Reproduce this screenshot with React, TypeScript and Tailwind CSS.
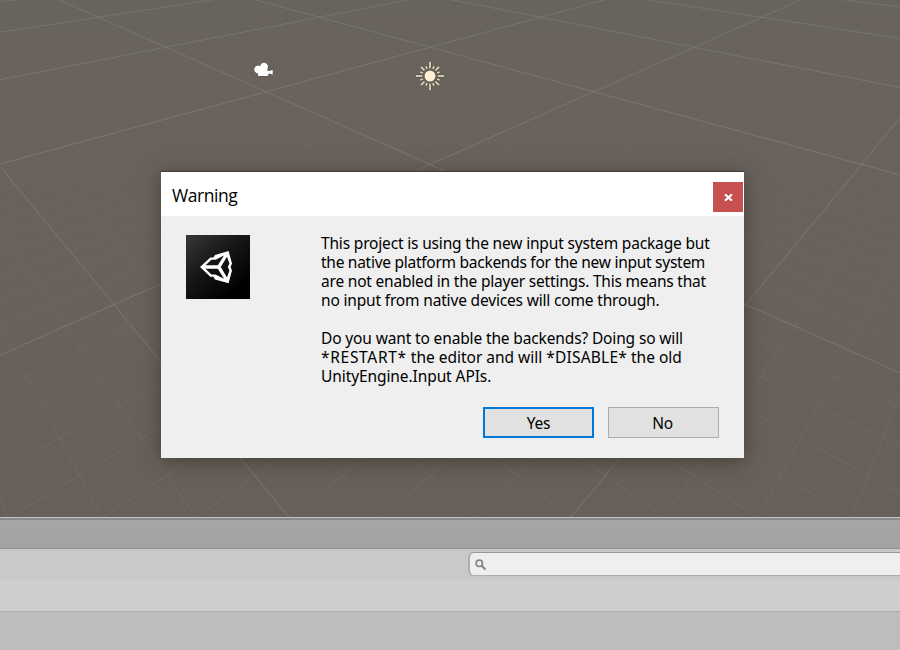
import React from "react";

const CENTER_X = 430;

function project(t: number, w: number): [number, number] {
  const s = 1 / (0.001582 - 0.000735 * t);
  return [CENTER_X + s * w, s / 1.43 - 137.4];
}

function gridPath(offsets: number[]): string {
  const near = 0.74;
  const far = -6;
  return offsets
    .flatMap((c) =>
      [-0.5, 0.5].map((slope) => {
        const a = project(near, c + slope * near);
        const b = project(far, c + slope * far);
        return `M${a[0].toFixed(2)} ${a[1].toFixed(2)}L${b[0].toFixed(2)} ${b[1].toFixed(2)}`;
      }),
    )
    .join("");
}

const MAJOR = gridPath(Array.from({ length: 14 }, (_, i) => i - 6.5));
const MINOR = gridPath(
  Array.from({ length: 101 }, (_, i) => i - 50)
    .filter((i) => Math.abs(i) % 10 !== 5)
    .map((i) => i / 10),
);

function SceneGrid() {
  return (
    <svg className="block h-full w-full" viewBox="0 0 900 517" fill="none">
      <defs>
        <linearGradient id="minorFade" gradientUnits="userSpaceOnUse" x1="0" y1="70" x2="0" y2="480">
          <stop offset="0" stopColor="#74786f" stopOpacity="0" />
          <stop offset="0.4" stopColor="#74786f" stopOpacity="0.17" />
          <stop offset="1" stopColor="#72756c" stopOpacity="0.5" />
        </linearGradient>
        <linearGradient id="majorFade" gradientUnits="userSpaceOnUse" x1="0" y1="0" x2="0" y2="517">
          <stop offset="0" stopColor="#81827e" stopOpacity="0.5" />
          <stop offset="0.3" stopColor="#82827f" stopOpacity="0.65" />
          <stop offset="1" stopColor="#82817e" stopOpacity="0.7" />
        </linearGradient>
      </defs>
      <path d={MINOR} stroke="url(#minorFade)" />
      <path d={MAJOR} stroke="url(#majorFade)" />
      <path
        transform="translate(0.7 0)"
        fill="#fff"
        stroke="#4b4641"
        strokeOpacity="0.5"
        strokeWidth="1.2"
        paintOrder="stroke"
        d="M257.3 76V73.4a3.9 3.9 0 1 1 2.2-7.2a3.9 3.9 0 1 1 7.3 2.3v2.2l2 .2l3.2-1.2v5l-3.2-1.1l-1.2.5v1.2l-1 .7z"
      />
      {["#4b4641", "#ded3b5"].map((color, pass) => (
        <g key={color} stroke={color} strokeWidth={pass ? 1.8 : 3.4} strokeOpacity={pass ? 1 : 0.4}>
          {Array.from({ length: 16 }, (_, i) => {
            const outer = i % 4 === 0 ? 14 : i % 2 === 0 ? 12.8 : 10.4;
            return (
              <line
                key={i}
                x1="0"
                y1={-7.8}
                x2="0"
                y2={-outer}
                transform={`translate(430 76) rotate(${i * 22.5})`}
              />
            );
          })}
          <circle
            cx="430"
            cy="76"
            r={pass ? 5.5 : 6.2}
            fill={pass ? "#fff0d3" : color}
            stroke="none"
            fillOpacity={pass ? 1 : 0.5}
          />
        </g>
      ))}
    </svg>
  );
}

function UnityIcon() {
  return (
    <svg className="size-16 shrink-0" viewBox="0 0 64 64">
      <defs>
        <linearGradient id="tile" x1="0" y1="0" x2="0.75" y2="0.9">
          <stop offset="0" stopColor="#373737" />
          <stop offset="0.5" stopColor="#171717" />
          <stop offset="1" stopColor="#000" />
        </linearGradient>
      </defs>
      <rect width="64" height="64" fill="url(#tile)" />
      <path
        fill="#fff"
        fillRule="evenodd"
        d="M14 32L24.3 22.4H27.4L29 20L42.6 16L46 28.6L44.6 32L46 35.4L42.6 48.3L29 44.5L27.4 41.8H24.3ZM19.5 30.3H31.8L38 20.4L29.5 24.8H25.4ZM19.5 33.7H31.8L38 43.8L29.5 39.4H25.4ZM34.8 32L41 42.4L43.4 35.4L41.8 32L43.4 28.6L41 21.7Z"
      />
    </svg>
  );
}

function Message() {
  return (
    <div className="-mt-px ml-[71px] whitespace-pre font-['Noto_Sans',sans-serif] text-[15.5px] leading-[19px]">
      <p className="tracking-[-0.17px]">This project is using the new input system package but</p>
      <p className="tracking-[-0.27px]">the native platform backends for the new input system</p>
      <p className="tracking-[-0.2px]">are not enabled in the player settings. This means that</p>
      <p className="tracking-[-0.17px]">no input from native devices will come through.</p>
      <p className="mt-[19px] tracking-[-0.14px]">Do you want to enable the backends? Doing so will</p>
      <p>
        <span className="tracking-[0.7px]">*RESTART*</span>
        <span className="tracking-[-0.02px]"> the editor and will </span>
        <span className="tracking-[0.22px]">*DISABLE*</span>
        <span className="tracking-[-0.02px]"> the old</span>
      </p>
      <p className="tracking-[-0.09px]">UnityEngine.Input APIs.</p>
    </div>
  );
}

function WarningDialog() {
  return (
    <div
      role="dialog"
      className="absolute left-[161px] top-[171px] flex h-[287px] w-[583px] flex-col border-t border-[#413c38] bg-[#efefef] text-black shadow-[0_3px_18px_rgba(40,38,30,0.55)]"
    >
      <div className="flex h-11 shrink-0 items-start justify-between bg-white pl-[11px] pr-px">
        <h1 className="mt-[11px] font-['Open_Sans',sans-serif] text-[17.5px] leading-6 tracking-[-0.45px]">Warning</h1>
        <button aria-label="Close" className="mt-2.5 flex h-[30px] w-[30px] items-center justify-center bg-[#c75050]">
          <svg className="ml-px mt-px h-[7px] w-[9px]" viewBox="0 0 9 7">
            <path d="M1 0.3L8 6.7M8 0.3L1 6.7" stroke="#fff" strokeWidth="2.2" />
          </svg>
        </button>
      </div>
      <div className="flex h-[173px] shrink-0 pl-[25px] pt-[19px]">
        <UnityIcon />
        <Message />
      </div>
      <div className="mt-[18px] flex justify-end gap-3.5 pr-[25px] font-['Noto_Sans',sans-serif] text-[15.5px] leading-[19px] tracking-[-0.3px]">
        <button className="h-[31px] w-[111px] border-2 border-[#0078d7] bg-[#e1e1e1] pt-0.5">Yes</button>
        <button className="h-[31px] w-[111px] border border-[#adadad] bg-[#e1e1e1] pr-0.5 pt-0.5">No</button>
      </div>
    </div>
  );
}

export default function App() {
  return (
    <div className="relative flex h-[650px] w-[900px] flex-col overflow-hidden bg-[#bdbdbd]">
      <div className="h-[517px] shrink-0 bg-linear-to-b from-[#69635e] via-[#69615b] to-[#675f59]">
        <SceneGrid />
      </div>
      <div className="h-px shrink-0 bg-[#c7c5c4]" />
      <div className="h-0.5 shrink-0 bg-[#898989]" />
      <div className="h-[29px] shrink-0 border-b border-[#929292] bg-linear-to-b from-[#a6a6a6] to-[#a2a2a2]" />
      <div className="flex h-[31px] shrink-0 justify-end bg-[#c9c9c9] pt-[3px]">
        <div className="flex h-6 w-[432px] items-center rounded-l-[6px] border border-l-2 border-r-0 border-[#adadad] border-t-[#979797] bg-[#efefef] pl-[5px]">
          <svg className="mt-px h-3 w-3" viewBox="0 0 12 12" fill="none" stroke="#868686">
            <circle cx="4.3" cy="4.3" r="3.2" strokeWidth="1.7" />
            <path d="M6.7 6.7L10.6 10.6" strokeWidth="2" />
          </svg>
        </div>
      </div>
      <div className="h-8 shrink-0 border-b border-[#adadad] bg-[#cecece]" />
      <WarningDialog />
    </div>
  );
}
